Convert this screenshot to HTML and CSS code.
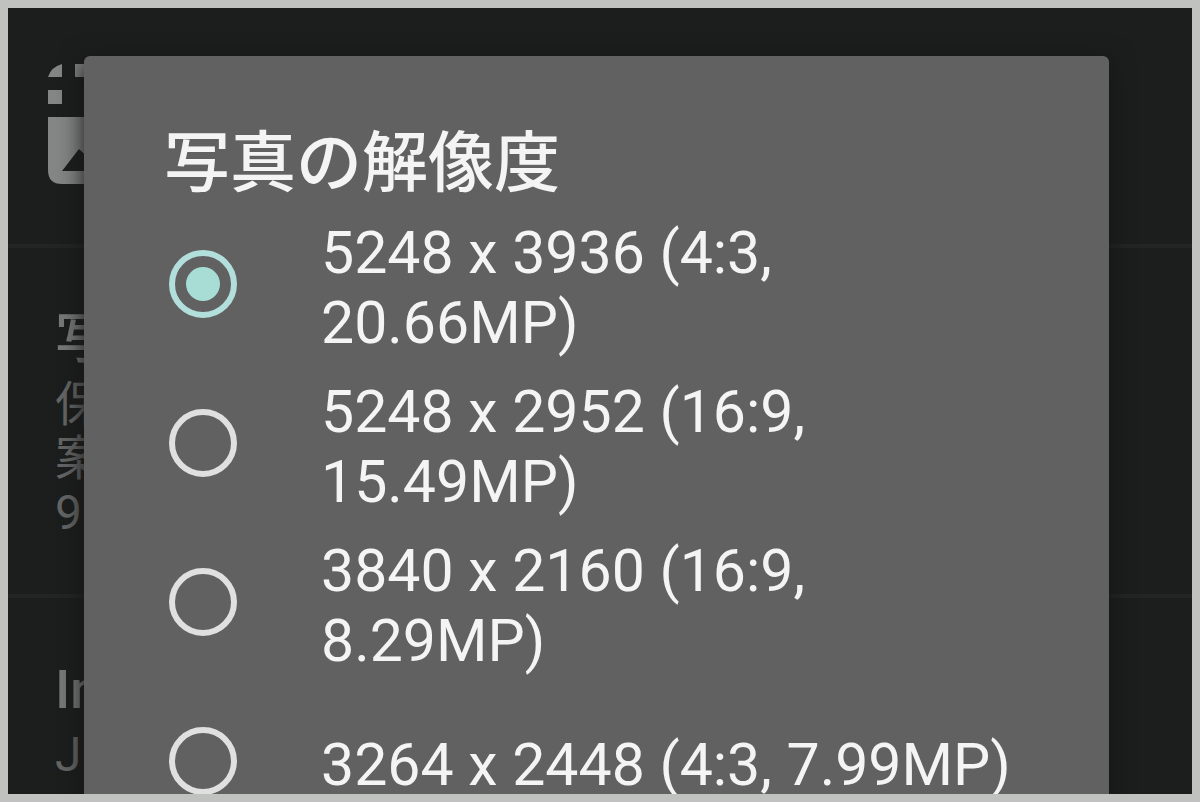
FILE: index.html
```html
<!DOCTYPE html>
<html lang="ja">
<head>
<meta charset="utf-8">
<meta name="viewport" content="width=device-width, initial-scale=1">
<title>写真の解像度</title>
<link rel="stylesheet" href="styles.css">
</head>
<body>
<div class="screen">
  <main class="settings">
    <section class="item item-icon">
      <svg class="icon" viewBox="0 0 120 120" aria-hidden="true">
        <path d="M0 13Q3 3 14 0V13ZM27 0H41V13H27ZM54 0H68V14H54ZM0 26H14V40H0Z"/>
        <path fill-rule="evenodd" d="M0 53H68V120H14Q0 120 0 106ZM14 107H68L45 98 31 85Z"/>
      </svg>
    </section>
    <section class="item">
      <h2 class="item-title">写</h2>
      <p class="item-text">保<br>案<br>90</p>
    </section>
    <section class="item">
      <h2 class="item-title">In</h2>
      <p class="item-text">J</p>
    </section>
  </main>
  <form class="dialog" role="dialog" aria-labelledby="dialog-title">
    <h1 class="dialog-title" id="dialog-title">写真の解像度</h1>
    <label class="option"><input class="radio" type="radio" name="size" checked><span class="option-text">5248 x 3936 (4:3, 20.66MP)</span></label>
    <label class="option"><input class="radio" type="radio" name="size"><span class="option-text">5248 x 2952 (16:9, 15.49MP)</span></label>
    <label class="option"><input class="radio" type="radio" name="size"><span class="option-text">3840 x 2160 (16:9, 8.29MP)</span></label>
    <label class="option"><input class="radio" type="radio" name="size"><span class="option-text">3264 x 2448 (4:3, 7.99MP)</span></label>
  </form>
</div>
</body>
</html>
```
FILE: styles.css
```css
* {
  box-sizing: border-box;
}

body {
  margin: 0;
  font-family: Roboto, "Noto Sans CJK JP", sans-serif;
}

.screen {
  position: relative;
  height: 100vh;
  border: 8px solid #c0c2c0;
  background: #1c1e1d;
  overflow: hidden;
}

.item {
  padding: 54px 47px;
  border-bottom: 4px solid #232524;
}

.item-icon {
  padding: 56px 40px;
}

.icon {
  display: block;
  width: 120px;
  height: 120px;
  margin-bottom: 4px;
  fill: #848685;
}

.item-title {
  margin: 0;
  font-size: 54px;
  font-weight: 500;
  line-height: 76px;
  color: #777978;
}

.item-text {
  margin: 0;
  font-size: 48px;
  line-height: 54px;
  color: #646665;
}

.dialog {
  position: absolute;
  top: 48px;
  left: 76px;
  right: 83px;
  padding: 68px 80px;
  border-radius: 6px 6px 0 0;
  background: #616161;
  box-shadow: 0 4px 24px #141414;
  color: #f4f4f4;
}

.dialog-title {
  margin: 0;
  font-size: 66px;
  font-weight: 500;
  line-height: 80px;
}

.option {
  display: flex;
  align-items: center;
  gap: 84px;
  min-height: 159px;
  padding-left: 5px;
}

.radio {
  appearance: none;
  display: grid;
  place-items: center;
  flex: none;
  width: 68px;
  height: 68px;
  margin: 0;
  border: 6px solid #e0e0e0;
  border-radius: 50%;
}

.radio:checked {
  border-color: #b2dfdb;
}

.radio:checked::before {
  content: "";
  width: 34px;
  height: 34px;
  border-radius: 50%;
  background: #a7ddd5;
}

.option-text {
  padding-top: 8px;
  font-size: 59px;
  line-height: 70px;
}
```
